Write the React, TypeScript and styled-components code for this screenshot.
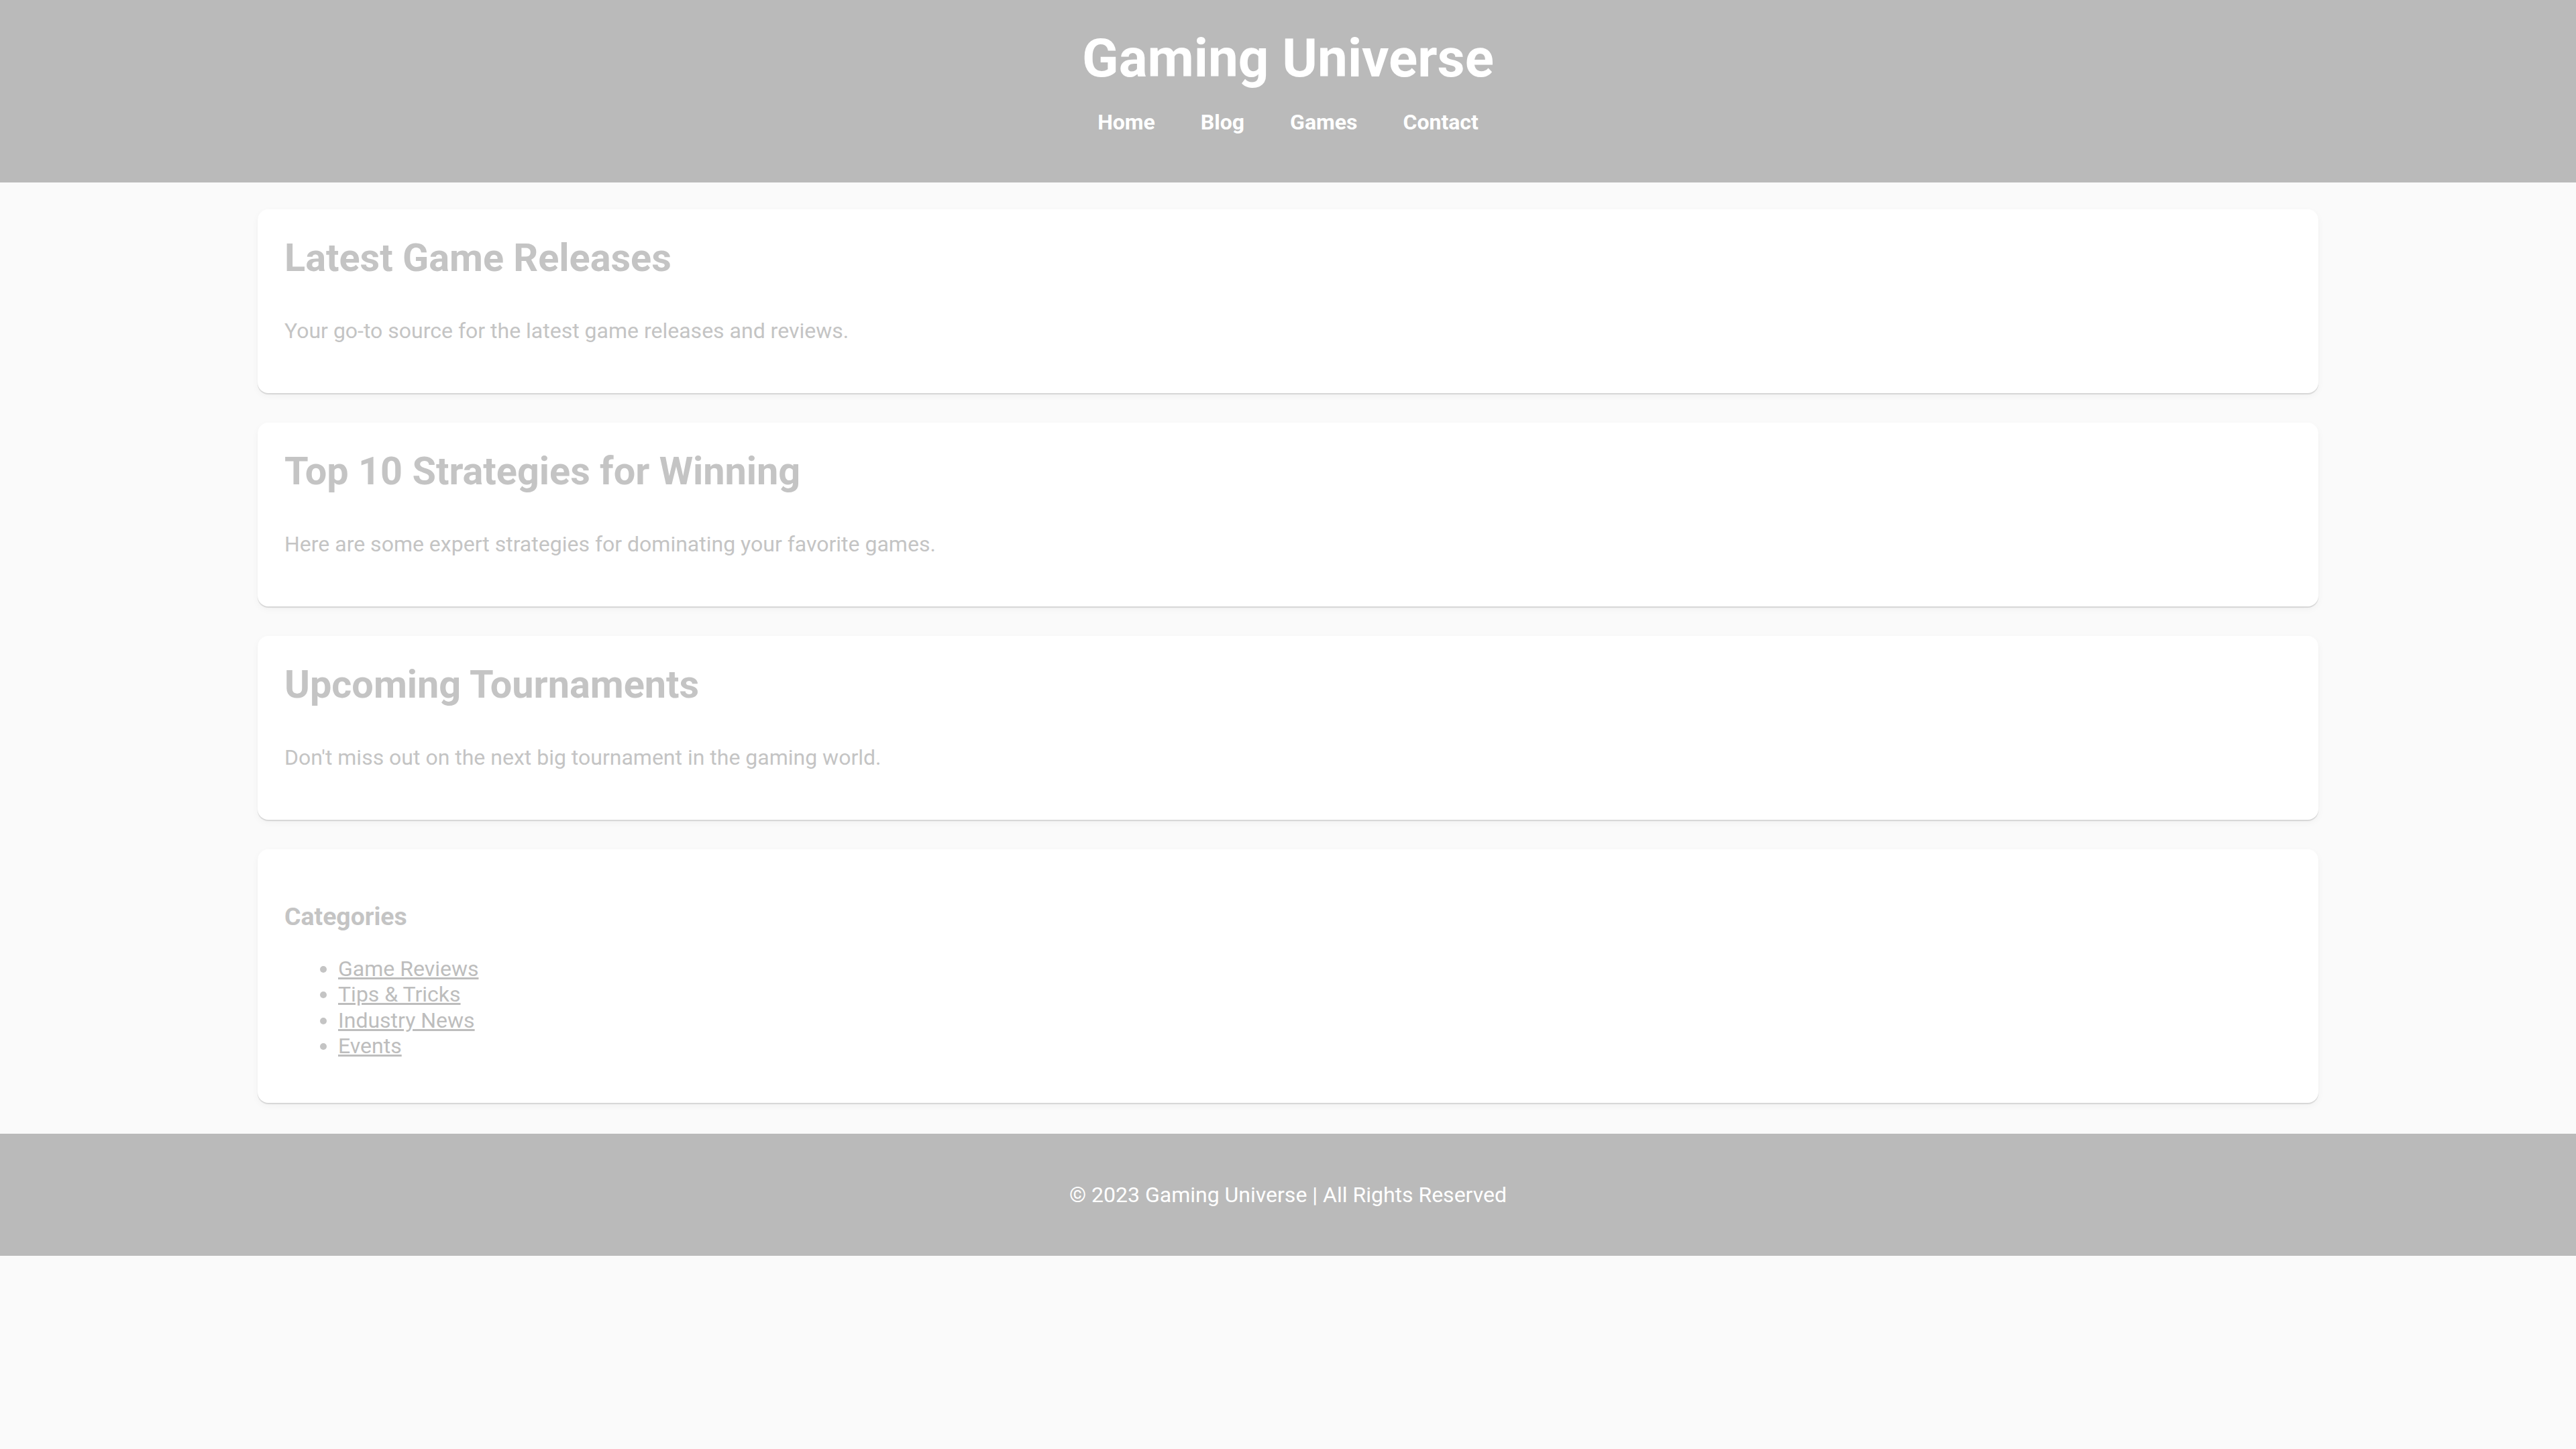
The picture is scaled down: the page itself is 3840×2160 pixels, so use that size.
import React from "react";
import styled, { createGlobalStyle } from "styled-components";

const GlobalStyle = createGlobalStyle`
  html, body {
    margin: 0;
    padding: 0;
    background: #fafafa;
    font-family: Roboto, "Liberation Sans", Arial, sans-serif;
    font-size: 32px;
    color: #c4c4c4;
  }
`;

const Header = styled.header`
  background: #bababa;
  color: #ffffff;
  text-align: center;
  padding: 40px 0 38px;
`;

const Title = styled.h1`
  margin: 0;
  font-size: 80px;
  font-weight: 700;
  line-height: 94px;
`;

const Nav = styled.nav`
  display: flex;
  justify-content: center;
  gap: 68px;
  margin: 29px 0 33px;
  line-height: 38px;
`;

const NavLink = styled.a`
  color: #ffffff;
  text-decoration: none;
  font-weight: 700;
  font-size: 32px;
`;

const Main = styled.main`
  width: 80%;
  margin: 0 auto;
  padding: 40px 0 46px;
  display: flex;
  flex-direction: column;
  gap: 44px;
`;

const Card = styled.section`
  background: #ffffff;
  border-radius: 16px;
  padding: 40px;
  box-shadow: 0 2px 1px rgba(0, 0, 0, 0.12), 0 4px 12px rgba(0, 0, 0, 0.04);
`;

const CardTitle = styled.h2`
  margin: 0 0 56px;
  font-size: 57.6px;
  font-weight: 700;
  line-height: 66px;
  color: #c4c4c4;
`;

const CardText = styled.p`
  margin: 0 0 34px;
  font-size: 32px;
  line-height: 38px;
  color: #c4c4c4;
`;

const SideTitle = styled.h3`
  margin: 38px 0 37px;
  font-size: 37.4px;
  font-weight: 700;
  line-height: 44px;
  color: #c4c4c4;
`;

const List = styled.ul`
  margin: 0 0 25px;
  padding-left: 80px;
  line-height: 38.4px;
  color: #c4c4c4;
`;

const ListLink = styled.a`
  color: #bdbdbd;
  text-decoration: underline;
`;

const Footer = styled.footer`
  background: #bababa;
  color: #ffffff;
  text-align: center;
  padding: 72px 0;
  font-size: 32px;
  line-height: 38px;
`;

const articles = [
  {
    title: "Latest Game Releases",
    text: "Your go-to source for the latest game releases and reviews.",
  },
  {
    title: "Top 10 Strategies for Winning",
    text: "Here are some expert strategies for dominating your favorite games.",
  },
  {
    title: "Upcoming Tournaments",
    text: "Don't miss out on the next big tournament in the gaming world.",
  },
];

const categories = ["Game Reviews", "Tips & Tricks", "Industry News", "Events"];

export default function App() {
  return (
    <>
      <GlobalStyle />
      <Header>
        <Title>Gaming Universe</Title>
        <Nav>
          <NavLink href="#">Home</NavLink>
          <NavLink href="#">Blog</NavLink>
          <NavLink href="#">Games</NavLink>
          <NavLink href="#">Contact</NavLink>
        </Nav>
      </Header>
      <Main>
        {articles.map((a) => (
          <Card key={a.title}>
            <CardTitle>{a.title}</CardTitle>
            <CardText>{a.text}</CardText>
          </Card>
        ))}
        <Card>
          <SideTitle>Categories</SideTitle>
          <List>
            {categories.map((c) => (
              <li key={c}>
                <ListLink href="#">{c}</ListLink>
              </li>
            ))}
          </List>
        </Card>
      </Main>
      <Footer>© 2023 Gaming Universe | All Rights Reserved</Footer>
    </>
  );
}
